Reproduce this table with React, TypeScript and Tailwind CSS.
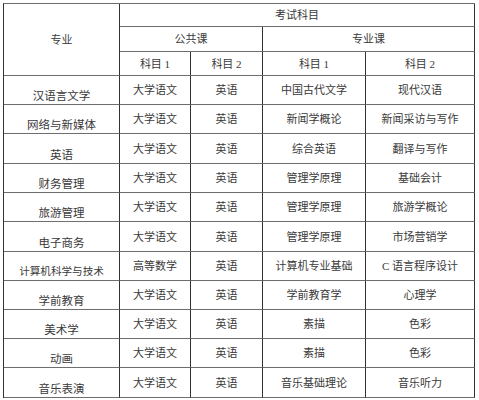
import React from "react";

const rows: [string, string, string, string, string][] = [
  ["汉语言文学", "大学语文", "英语", "中国古代文学", "现代汉语"],
  ["网络与新媒体", "大学语文", "英语", "新闻学概论", "新闻采访与写作"],
  ["英语", "大学语文", "英语", "综合英语", "翻译与写作"],
  ["财务管理", "大学语文", "英语", "管理学原理", "基础会计"],
  ["旅游管理", "大学语文", "英语", "管理学原理", "旅游学概论"],
  ["电子商务", "大学语文", "英语", "管理学原理", "市场营销学"],
  ["计算机科学与技术", "高等数学", "英语", "计算机专业基础", "C 语言程序设计"],
  ["学前教育", "大学语文", "英语", "学前教育学", "心理学"],
  ["美术学", "大学语文", "英语", "素描", "色彩"],
  ["动画", "大学语文", "英语", "素描", "色彩"],
  ["音乐表演", "大学语文", "英语", "音乐基础理论", "音乐听力"],
];

const cell =
  "border-r border-b border-r-[#333] border-b-[#6e6e6e] flex items-center justify-center text-[11px] leading-[14px] text-[#3a3a3a] whitespace-nowrap";

export default function App() {
  return (
    <div
      className="min-h-[400px] w-[479px] bg-white pl-[3px] pt-[3px]"
      style={{ fontFamily: '"Liberation Serif", "Noto Sans CJK SC", serif' }}
    >
      <div className="grid w-[472px] grid-cols-[116px_71px_72px_103px_109px] grid-rows-[23px_25px_24px_29px_29px_30px_29px_29px_30px_29px_29px_29px_29px_30px] border-l border-t border-l-[#333] border-t-[#6e6e6e]">
        <div className={`${cell} row-span-3 text-[11.5px]`}>专业</div>
        <div className={`${cell} col-span-4`}>考试科目</div>
        <div className={`${cell} col-span-2`}>公共课</div>
        <div className={`${cell} col-span-2`}>专业课</div>
        <div className={cell}>科目 1</div>
        <div className={cell}>科目 2</div>
        <div className={cell}>科目 1</div>
        <div className={cell}>科目 2</div>
        {rows.map((r) => (
          <React.Fragment key={r[0]}>
            <div
              className={`border-r border-b border-r-[#333] border-b-[#6e6e6e] flex items-end justify-center pb-[1px] leading-[14px] text-[#3a3a3a] whitespace-nowrap ${
                r[0].length > 7 ? "text-[10.6px]" : "text-[11.5px]"
              }`}
            >
              {r[0]}
            </div>
            <div className={cell}>{r[1]}</div>
            <div className={cell}>{r[2]}</div>
            <div className={cell}>{r[3]}</div>
            <div className={cell}>{r[4]}</div>
          </React.Fragment>
        ))}
      </div>
    </div>
  );
}
